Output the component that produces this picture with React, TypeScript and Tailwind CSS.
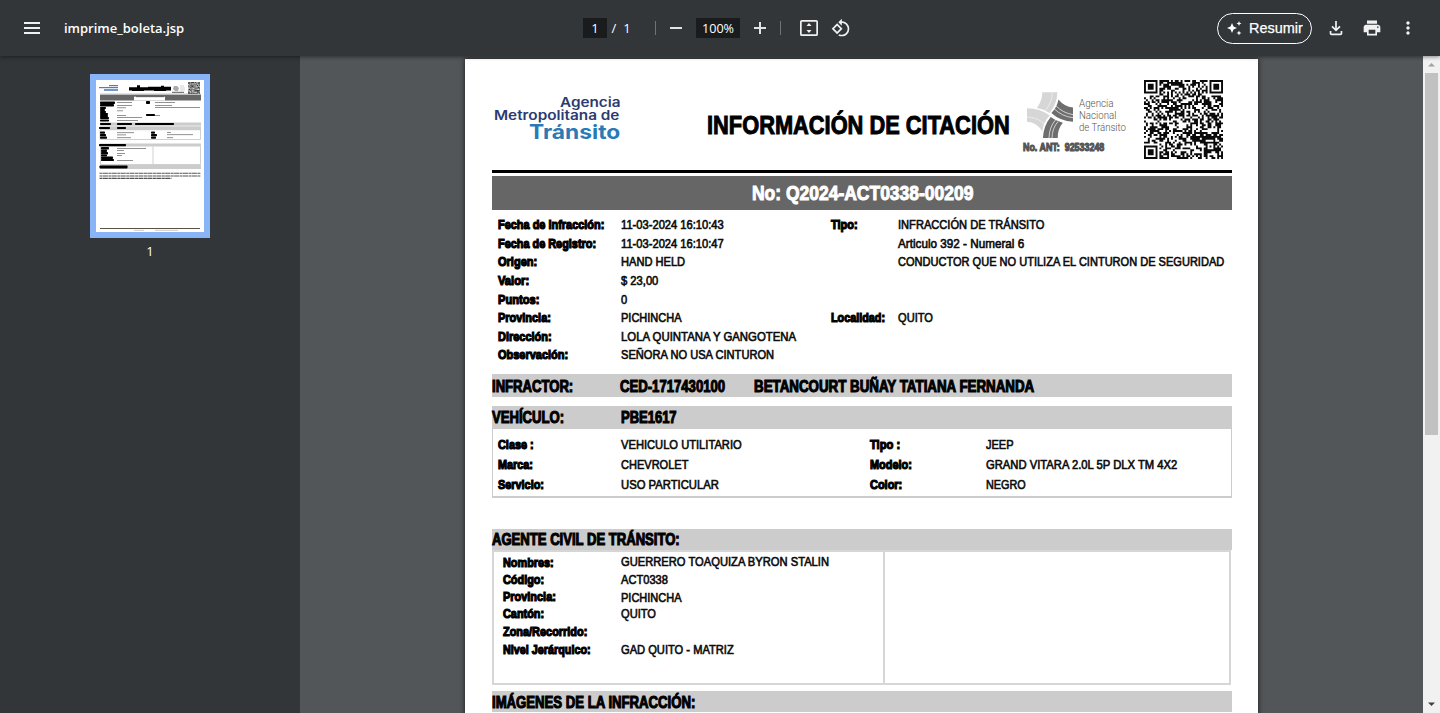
import { useLayoutEffect, useRef, useState } from "react";
import type { ReactNode } from "react";
import { MdMoreVert, MdPrint, MdRotate90DegreesCcw } from "react-icons/md";

/** One line of text, condensed or expanded horizontally to fill `w` pixels. */
function Fit({ w, className = "", children }: { w: number; className?: string; children: ReactNode }) {
  const ref = useRef<HTMLSpanElement>(null);
  const [scale, setScale] = useState(1);
  useLayoutEffect(() => {
    const natural = ref.current?.offsetWidth ?? 0;
    if (natural > 0) setScale(w / natural);
  }, [w]);
  return (
    <span className={`block shrink-0 whitespace-nowrap ${className}`} style={{ width: w }}>
      <span ref={ref} className="inline-block origin-left" style={{ transform: `scaleX(${scale})` }}>
        {children}
      </span>
    </span>
  );
}

const Label = ({ w, children }: { w: number; children: ReactNode }) => (
  <Fit w={w} className="text-[13px] font-bold text-black [-webkit-text-stroke:1.2px_black]">
    {children}
  </Fit>
);

const Value = ({ w, children }: { w: number; children: ReactNode }) => (
  <Fit w={w} className="text-[13px] text-[#0c0c0c] [-webkit-text-stroke:0.65px_#0c0c0c]">
    {children}
  </Fit>
);

const Heading = ({ w, children }: { w: number; children: ReactNode }) => (
  <Fit w={w} className="text-[16px] font-bold text-black [-webkit-text-stroke:1.1px_black]">
    {children}
  </Fit>
);

type Cell = [string, number];

const citation: { label: Cell; value: Cell; label2?: Cell; value2?: Cell }[] = [
  { label: ["Fecha de Infracción:", 106], value: ["11-03-2024 16:10:43", 103], label2: ["Tipo:", 27], value2: ["INFRACCIÓN DE TRÁNSITO", 146] },
  { label: ["Fecha de Registro:", 98], value: ["11-03-2024 16:10:47", 103], value2: ["Articulo 392 - Numeral 6", 126] },
  { label: ["Origen:", 39], value: ["HAND HELD", 64], value2: ["CONDUCTOR QUE NO UTILIZA EL CINTURON DE SEGURIDAD", 326] },
  { label: ["Valor:", 31], value: ["$ 23,00", 37] },
  { label: ["Puntos:", 41], value: ["0", 6] },
  { label: ["Provincia:", 53], value: ["PICHINCHA", 61], label2: ["Localidad:", 54], value2: ["QUITO", 35] },
  { label: ["Dirección:", 54], value: ["LOLA QUINTANA Y GANGOTENA", 175] },
  { label: ["Observación:", 70], value: ["SEÑORA NO USA CINTURON", 153] },
];

const vehicle: { label: Cell; value: Cell; label2: Cell; value2: Cell }[] = [
  { label: ["Clase :", 36], value: ["VEHICULO UTILITARIO", 121], label2: ["Tipo :", 30], value2: ["JEEP", 28] },
  { label: ["Marca:", 35], value: ["CHEVROLET", 67], label2: ["Modelo:", 42], value2: ["GRAND VITARA 2.0L 5P DLX TM 4X2", 191] },
  { label: ["Servicio:", 46], value: ["USO PARTICULAR", 98], label2: ["Color:", 32], value2: ["NEGRO", 40] },
];

const QR_SIZE = 41;

function noise(x: number, y: number) {
  let h = Math.imul(x + 17, 374761393) ^ Math.imul(y + 5, 668265263);
  h = Math.imul(h ^ (h >>> 13), 1274126177);
  h = Math.imul(h ^ (h >>> 15), 2246822519);
  return ((h ^ (h >>> 16)) >>> 0) % 100;
}

function qrPath() {
  const finder = (x: number, y: number, ox: number, oy: number) => {
    const dx = x - ox;
    const dy = y - oy;
    if (dx < -1 || dx > 7 || dy < -1 || dy > 7) return null;
    const ring = Math.max(Math.abs(dx - 3), Math.abs(dy - 3));
    return ring === 3 || ring <= 1;
  };
  let d = "";
  for (let y = 0; y < QR_SIZE; y++) {
    for (let x = 0; x < QR_SIZE; x++) {
      let on = noise(x, y) < 53;
      if (x === 6) on = y % 2 === 0;
      if (y === 6) on = x % 2 === 0;
      const ring = Math.max(Math.abs(x - 34), Math.abs(y - 34));
      if (ring <= 2) on = ring !== 1;
      const f = finder(x, y, 0, 0) ?? finder(x, y, 34, 0) ?? finder(x, y, 0, 34);
      if (f !== null) on = f;
      if (on) d += `M${x} ${y}h1v1h-1z`;
    }
  }
  return d;
}

const qr = qrPath();

function AntLogo() {
  return (
    <svg className="size-[46px]" viewBox="80 80 136 136" fill="none">
      <path d="M125 81H170Q169 115 147 142Q130 130 109 127Q126 106 125 81Z" fill="#d6d6d6" />
      <path d="M173 102Q190 123 216 126V168Q178 166 152 142Q169 125 173 102Z" fill="#6e6e6e" />
      <path d="M127 216Q129 180 150 154Q165 166 186 171Q170 190 171 216Z" fill="#6e6e6e" />
      <path d="M80 128Q118 128 147 149Q128 170 125 197Q110 170 80 168Z" fill="#d6d6d6" />
      <path d="M155 81Q154 112 134 135M80 154Q110 154 130 174" stroke="#f4f4f4" strokeWidth="2" />
      <path d="M166 121Q186 142 216 147M160 129Q182 152 216 156M145 216Q146 184 164 163M154 216Q154 188 172 167" stroke="#fff" strokeWidth="2" />
    </svg>
  );
}

const blackRows: [number, number, number, number][] = [
  [4, 21.5, 15, 2.5], [4, 24, 14, 2.5], [4, 27, 6, 2], [4, 29, 5, 2], [4, 31, 6, 2], [4, 33, 8, 2], [4, 35, 8, 2], [4, 37, 9, 2], [4, 39.5, 9, 2],
  [50, 21, 4, 3], [50, 34, 9, 2],
  [4, 43, 11, 2], [21, 43, 15, 2], [39, 43, 39, 2],
  [3, 47, 11, 2], [21, 47, 9, 2],
  [4, 51.5, 5, 2.2], [4, 54, 6, 2.2], [4, 56.5, 7, 2.2], [55, 51.5, 4, 2.2], [55, 54, 6, 2.2], [55, 56.5, 5, 2.2],
  [3, 64, 27, 2.2], [5, 67, 8, 2.5], [5, 69.5, 6, 2.5], [5, 72, 7, 2.5], [5, 74.5, 6, 2], [5, 76.5, 12, 2.5], [5, 79, 13, 2],
  [3.5, 85.5, 28, 3],
];
const greyRows: [number, number][] = [
  [22, 15], [25.2, 15], [27.4, 9], [30.4, 6], [35.2, 9], [37.2, 25], [40.2, 21],
  [52.3, 17], [54.5, 9], [57.3, 14], [68, 29], [70, 7], [73.2, 8], [75.2, 5], [80.2, 16],
];

function Thumbnail() {
  return (
    <svg className="block h-[152px] w-[108px] bg-white" viewBox="0 0 108 152">
      <g fill="#6676a8">
        <rect x="13" y="5" width="9" height="1.2" />
        <rect x="3" y="7" width="19" height="1.2" />
        <rect x="8" y="9.2" width="14" height="1.6" fill="#4b83bd" />
      </g>
      <path d="M33 7.2h8v-2h3v2h8v-.5h13v-1h3v1h7v3.700h-5v.5h-12v-.5h-10v.5h-12v-.5h-3z" fill="#000" />
      <path d="M78 6h3l2 2-1 3h-3l-2-2z" fill="#aaa" />
      <path d="M84 6h4M84 8h5M84 10h5" stroke="#bbb" strokeWidth=".7" />
      <path d="M76 12.300h12" stroke="#444" strokeWidth=".9" />
      <svg x="92" y="2" width="12" height="12" viewBox="0 0 41 41"><path d={qr} fill="#111" /></svg>
      <path d="M4 14.2h101" stroke="#444" strokeWidth=".5" />
      <rect x="4" y="15" width="101" height="5.5" fill="#666" />
      <rect x="38" y="16.700" width="31" height="3.8" fill="#fff" />
      <path d="M40 16.700h28" stroke="#333" strokeWidth=".6" />
      <g fill="#ccc">
        <rect x="4" y="42.5" width="101" height="3.2" />
        <rect x="4" y="46.3" width="101" height="3.9" />
        <rect x="4" y="63.5" width="101" height="3" />
        <rect x="4" y="85" width="101" height="4" />
      </g>
      <path d="M4 50v9.5h100.5V50M4.500 66.500V84.500H104.500V66.500M57 66.500v18" fill="none" stroke="#c4c4c4" strokeWidth=".8" />
      {blackRows.map(([x, y, w, h], i) => <rect key={i} x={x} y={y} width={w} height={h} rx=".7" fill="#000" />)}
      {greyRows.map(([y, w], i) => <rect key={i} x="21" y={y} width={w} height=".8" fill="#777" />)}
      <g fill="#777">
        <rect x="59" y="22" width="20" height=".8" /><rect x="59" y="25" width="17" height=".8" /><rect x="59" y="27" width="45" height=".8" />
        <rect x="59" y="35" width="5" height=".8" /><rect x="71" y="52" width="4" height=".8" /><rect x="71" y="54.300" width="26" height=".8" /><rect x="71" y="57.300" width="6" height=".8" />
      </g>
      <path d="M3.500 93.300h101M3.500 96h101M3.500 98.400h72" stroke="#555" strokeWidth="1.100" strokeDasharray="3 .4 5 .5" />
      <path d="M4 148.500h100" stroke="#4a3d30" strokeWidth=".9" />
      <path d="M38 150.300h10M59 150.300h23" stroke="#aaa" strokeWidth=".6" />
    </svg>
  );
}

function Toolbar() {
  return (
    <header className="relative z-10 flex h-14 shrink-0 items-center bg-[#323639] pl-6 text-white shadow-[0_1px_4px_rgba(0,0,0,0.45)] [font-family:'Open_Sans',sans-serif]">
      <svg className="h-3 w-4 shrink-0" viewBox="0 0 16 12" fill="#f1f1f1">
        <path d="M0 0h16v2H0zM0 5h16v2H0zM0 10h16v2H0z" />
      </svg>
      <Fit w={120} className="ml-6 mt-[2px] text-[13px] font-semibold">imprime_boleta.jsp</Fit>
      <div className="ml-[399px] flex h-5 w-6 shrink-0 items-center justify-center bg-[#191b1c] pt-px text-[13px]">1</div>
      <span className="ml-1 w-[6px] pt-px text-center text-[13px]">/</span>
      <span className="ml-[6px] w-2 pt-px text-center text-[13px]">1</span>
      <span className="ml-[24px] h-[14px] w-px shrink-0 bg-[#707376]" />
      <span className="ml-[14px] h-[2px] w-3 shrink-0 bg-[#e2e3e3]" />
      <div className="ml-[14px] flex h-5 w-11 shrink-0 items-center justify-center bg-[#191b1c] pt-px">
        <Fit w={32} className="text-[13px]">100%</Fit>
      </div>
      <svg className="ml-[14px] size-3 shrink-0" viewBox="0 0 12 12" fill="#e2e3e3"><path d="M5 0h2v5h5v2H7v5H5V7H0V5h5z" /></svg>
      <span className="ml-[14px] h-[14px] w-px shrink-0 bg-[#707376]" />
      <svg className="ml-[19px] h-4 w-[18px] shrink-0" viewBox="0 0 18 16" fill="none">
        <rect x=".85" y=".85" width="16.3" height="14.3" rx="1" stroke="#f1f1f1" strokeWidth="1.700" />
        <path d="M9 3 11.500 6h-5zM9 13l2.500-3h-5z" fill="#f1f1f1" />
      </svg>
      <MdRotate90DegreesCcw className="ml-[13px] size-5 shrink-0 text-[#f1f1f1]" />
      <div className="ml-[366px] flex h-[31px] w-[95px] shrink-0 items-center rounded-full border border-white pl-[8px]">
        <svg className="size-4" viewBox="0 0 16 16" fill="#fff">
          <path d="M6 3 7.500 6.500 11 8 7.500 9.500 6 13 4.500 9.500 1 8 4.500 6.500zM13 1l.7 1.800 1.800.7-1.800.7-.7 1.800-.7-1.800-1.800-.7 1.800-.7zM13 10.500l.7 1.800 1.800.7-1.800.7-.7 1.800-.7-1.800-1.800-.7 1.800-.7z" />
        </svg>
        <Fit w={54} className="ml-[7px] text-[15px] [font-family:'Liberation_Sans',Arial,sans-serif] [-webkit-text-stroke:0.25px_white]">Resumir</Fit>
      </div>
      <svg className="ml-[15px] size-[18px] shrink-0" viewBox="3 3 18 18" fill="#f1f1f1">
        <path d="m12 15.600-4.600-4.600 1.200-1.200 2.550 2.550V5h1.700v7.350L15.400 9.800l1.200 1.200zM5.700 15h1.700v2.600h9.200V15h1.700v2.500q0 1.800-1.800 1.800h-9q-1.800 0-1.800-1.800z" />
      </svg>
      <MdPrint className="ml-[17px] size-5 shrink-0 text-[#f1f1f1]" />
      <MdMoreVert className="ml-4 size-5 shrink-0 text-[#f1f1f1]" />
    </header>
  );
}

function DocumentHeader() {
  return (
    <div className="flex h-[114px] items-start border-b-[3px] border-black">
      <div className="ml-[2px] mt-[37px] flex w-[126px] flex-col items-end text-[#2b3a72] [font-family:Inter,sans-serif]">
        <Fit w={60} className="text-[13px] font-semibold leading-[13px]">Agencia</Fit>
        <Fit w={126} className="text-[13px] font-semibold leading-[13px]">Metropolitana de</Fit>
        <Fit w={91} className="text-[20px] font-bold leading-[20px] text-[#2a7ab5]">Tránsito</Fit>
      </div>
      <Fit w={303} className="ml-[87px] mt-[49px] text-[26px] font-bold leading-[34px] [-webkit-text-stroke:1px_black]">
        INFORMACIÓN DE CITACIÓN
      </Fit>
      <div className="ml-[13px] mt-[33px] flex w-[110px] flex-col">
        <div className="flex pl-[4px]">
          <AntLogo />
          <div className="ml-[6px] mt-[5px] text-[11.500px] leading-[12px] text-[#555] [font-family:Roboto,sans-serif]">
            <Fit w={35} className="font-light">Agencia</Fit>
            <Fit w={37} className="font-light">Nacional</Fit>
            <Fit w={47} className="font-light">de Tránsito</Fit>
          </div>
        </div>
        <Fit w={81} className="mt-[4px] text-[10px] font-bold leading-[12px] text-[#555] [-webkit-text-stroke:1px_#555]">
          No. ANT:&nbsp; 92533248
        </Fit>
      </div>
      <svg className="ml-[11px] mt-[21px] size-[79px]" viewBox="0 0 41 41"><path d={qr} fill="#0a0a0a" /></svg>
    </div>
  );
}

const agentLabels: { text: Cell; h: string }[] = [
  { text: ["Nombres:", 51], h: "h-[17px]" },
  { text: ["Código:", 41], h: "h-[17px]" },
  { text: ["Provincia:", 53], h: "h-[17px]" },
  { text: ["Cantón:", 41], h: "h-[18px]" },
  { text: ["Zona/Recorrido:", 84], h: "h-[18px]" },
  { text: ["Nivel Jerárquico:", 88], h: "h-[17px]" },
];
const agentValues: { text: Cell; h: string }[] = [
  { text: ["GUERRERO TOAQUIZA BYRON STALIN", 208], h: "h-[18px]" },
  { text: ["ACT0338", 47], h: "h-[18px]" },
  { text: ["PICHINCHA", 61], h: "h-4" },
  { text: ["QUITO", 35], h: "h-9" },
  { text: ["GAD QUITO - MATRIZ", 113], h: "h-[18px]" },
];

function DocumentPage() {
  return (
    <article className="mt-[3px] ml-[165px] h-[1122px] w-[793px] shrink-0 bg-white pl-[27px] pr-[26px] text-black shadow-[0_0_5px_rgba(0,0,0,0.7)] [font-family:'Liberation_Sans',Arial,sans-serif]">
      <DocumentHeader />
      <div className="mt-[3px] flex h-[34px] items-center justify-center bg-[#666]">
        <Fit w={221} className="text-[20px] font-bold text-white [-webkit-text-stroke:1px_white]">No: Q2024-ACT0338-00209</Fit>
      </div>

      <section className="pt-[6px] pl-[6px]">
        {citation.map((r) => (
          <div key={r.label[0]} className="grid h-[18.600px] grid-cols-[123px_210px_67px_1fr] items-center leading-[18px]">
            <Label w={r.label[1]}>{r.label[0]}</Label>
            <Value w={r.value[1]}>{r.value[0]}</Value>
            <div>{r.label2 && <Label w={r.label2[1]}>{r.label2[0]}</Label>}</div>
            <div>{r.value2 && <Value w={r.value2[1]}>{r.value2[0]}</Value>}</div>
          </div>
        ))}
      </section>

      <div className="mt-[9.200px] grid h-[23px] grid-cols-[128px_134px_1fr] items-center bg-[#ccc] pt-px">
        <Heading w={81}>INFRACTOR:</Heading>
        <Heading w={105}>CED-1717430100</Heading>
        <Heading w={280}>BETANCOURT BUÑAY TATIANA FERNANDA</Heading>
      </div>

      <div className="mt-[9px] grid h-[23px] grid-cols-[129px_1fr] items-center bg-[#ccc]">
        <Heading w={72}>VEHÍCULO:</Heading>
        <Heading w={56}>PBE1617</Heading>
      </div>
      <section className="h-[69px] border-x border-b-2 border-[#ccc] pl-[5px] pt-[6px]">
        {vehicle.map((r) => (
          <div key={r.label[0]} className="grid h-5 grid-cols-[123px_249px_116px_1fr] items-center leading-5">
            <Label w={r.label[1]}>{r.label[0]}</Label>
            <Value w={r.value[1]}>{r.value[0]}</Value>
            <Label w={r.label2[1]}>{r.label2[0]}</Label>
            <Value w={r.value2[1]}>{r.value2[0]}</Value>
          </div>
        ))}
      </section>

      <div className="mt-[31px] flex h-[21px] items-center bg-[#ccc] pt-[2px]">
        <Heading w={188}>AGENTE CIVIL DE TRÁNSITO:</Heading>
      </div>
      <section className="mr-[1px] flex h-[135px] border-2 border-[#d6d6d6]">
        <div className="flex w-[391px] border-r-2 border-[#d6d6d6] pl-[9px] leading-[17px]">
          <div className="w-[118px] pt-[2px]">
            {agentLabels.map((l) => (
              <div key={l.text[0]} className={l.h}><Label w={l.text[1]}>{l.text[0]}</Label></div>
            ))}
          </div>
          <div className="pt-[1px]">
            {agentValues.map((v) => (
              <div key={v.text[0]} className={v.h}><Value w={v.text[1]}>{v.text[0]}</Value></div>
            ))}
          </div>
        </div>
      </section>

      <div className="mt-[6px] flex h-[21px] items-center bg-[#ccc] pt-[3px]">
        <Heading w={203}>IMÁGENES DE LA INFRACCIÓN:</Heading>
      </div>
    </article>
  );
}

function Scrollbar() {
  return (
    <div className="flex w-[17px] shrink-0 flex-col items-center bg-[#f1f1f1]">
      <svg className="h-4 w-[17px]" viewBox="0 0 17 16"><path d="M5 10.500h7L8.500 7z" fill="#a3a3a3" /></svg>
      <div className="mt-px h-[362px] w-[13px] bg-[#c1c1c1]" />
      <svg className="mt-auto h-[17px] w-[17px]" viewBox="0 0 17 17"><path d="M5 6.500h7L8.500 10z" fill="#404040" /></svg>
    </div>
  );
}

export default function App() {
  return (
    <div className="flex h-[713px] w-[1440px] flex-col overflow-hidden bg-[#525659]">
      <Toolbar />
      <div className="flex min-h-0 flex-1">
        <aside className="flex w-[300px] shrink-0 flex-col items-center bg-[#323639] pt-[18px]">
          <div className="border-[6px] border-[#8ab4f8]"><Thumbnail /></div>
          <span className="mt-[3px] text-[13px] leading-5 text-white [font-family:'Open_Sans',sans-serif]">1</span>
        </aside>
        <main className="min-w-0 flex-1 overflow-hidden">
          <DocumentPage />
        </main>
        <Scrollbar />
      </div>
    </div>
  );
}
